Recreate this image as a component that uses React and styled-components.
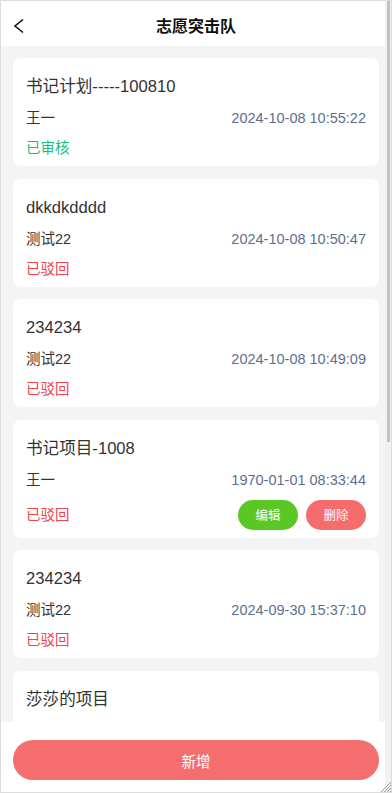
import styled, { createGlobalStyle } from "styled-components";

const GlobalStyle = createGlobalStyle`
  * { box-sizing: border-box; }
  body {
    margin: 0;
    font-family: "Liberation Sans", Arial, "Noto Sans CJK SC", sans-serif;
  }
`;

const records = [
  { title: "书记计划-----100810", name: "王一", time: "2024-10-08 10:55:22", status: "ok" },
  { title: "dkkdkdddd", name: "测试22", time: "2024-10-08 10:50:47", status: "back" },
  { title: "234234", name: "测试22", time: "2024-10-08 10:49:09", status: "back" },
  { title: "书记项目-1008", name: "王一", time: "1970-01-01 08:33:44", status: "back", editable: true },
  { title: "234234", name: "测试22", time: "2024-09-30 15:37:10", status: "back" },
  { title: "莎莎的项目", name: "测试22", time: "2024-09-30 15:20:11", status: "back" },
];

const App = () => {
  return (
    <>
      <GlobalStyle />
      <Frame>
        <Header>
          <BackBtn aria-label="返回">
            <svg width="12" height="16" viewBox="0 0 12 16">
              <path d="M10 1.5 L2 8 L10 14.5" fill="none" stroke="#111" strokeWidth="1.6" />
            </svg>
          </BackBtn>
          <Title>志愿突击队</Title>
        </Header>

        <List>
          {records.map((r, i) => (
            <Card key={i}>
              <CardTitle>{r.title}</CardTitle>
              <Row>
                <Name>{r.name}</Name>
                <Time>{r.time}</Time>
              </Row>
              <StatusRow $tall={r.editable}>
                <Status $ok={r.status === "ok"}>{r.status === "ok" ? "已审核" : "已驳回"}</Status>
                {r.editable && (
                  <Actions>
                    <SmallBtn $color="#5ac725">编辑</SmallBtn>
                    <SmallBtn $color="#f56c6c">删除</SmallBtn>
                  </Actions>
                )}
              </StatusRow>
            </Card>
          ))}
        </List>

        <Footer>
          <AddBtn>新增</AddBtn>
        </Footer>

        <ScrollTrack>
          <ScrollThumb />
        </ScrollTrack>
        <Grip width="12" height="12" viewBox="0 0 12 12">
          <path d="M12 2 L2 12 M12 5 L5 12 M12 8 L8 12 M12 11 L11 12" stroke="#9a9a9a" strokeWidth="1" />
        </Grip>
      </Frame>
    </>
  );
};

const Frame = styled.div`
  position: relative;
  width: 392px;
  height: 793px;
  border: 1px solid #dcdcdc;
  background: #f4f4f4;
  display: flex;
  flex-direction: column;
  overflow: hidden;
`;

const Header = styled.div`
  height: 45px;
  flex-shrink: 0;
  background: #fff;
  display: flex;
  align-items: center;
  justify-content: center;
  position: relative;
`;

const BackBtn = styled.button`
  position: absolute;
  left: 12px;
  top: 17px;
  padding: 0;
  border: none;
  background: none;
  display: flex;
`;

const Title = styled.h1`
  margin: 0;
  margin-top: 3px;
  font-size: 16px;
  font-weight: bold;
  color: #111;
  font-family: "Noto Sans CJK SC", sans-serif;
`;

const List = styled.div`
  flex: 1;
  min-height: 0;
  overflow: hidden;
  padding: 12px;
  display: flex;
  flex-direction: column;
  gap: 12.5px;
`;

const Card = styled.div`
  flex-shrink: 0;
  background: #fff;
  border-radius: 8px;
  padding: 16px 13px 8px;
`;

const CardTitle = styled.div`
  font-size: 16.6px;
  line-height: 26px;
  color: #333;
`;

const Row = styled.div`
  margin-top: 8px;
  display: flex;
  justify-content: space-between;
  align-items: center;
  line-height: 20px;
  font-size: 14.5px;
`;

const Name = styled.span`
  color: #333;
`;

const Time = styled.span`
  color: #606f8f;
`;

const StatusRow = styled.div`
  margin-top: 10px;
  height: ${(p) => (p.$tall ? "30px" : "20px")};
  display: flex;
  justify-content: space-between;
  align-items: center;
`;

const Status = styled.span`
  font-size: 14.5px;
  line-height: 20px;
  color: ${(p) => (p.$ok ? "#19be7f" : "#f0434d")};
`;

const Actions = styled.div`
  display: flex;
  gap: 8px;
`;

const SmallBtn = styled.button`
  width: 60px;
  height: 30px;
  border: none;
  border-radius: 15px;
  background: ${(p) => p.$color};
  color: #fff;
  font-size: 12.5px;
  font-family: "Noto Sans CJK SC", sans-serif;
  padding: 0;
`;

const Footer = styled.div`
  position: absolute;
  left: 0;
  right: 0;
  bottom: 0;
  height: 70px;
  background: #fff;
  padding: 18px 12px 0;
`;

const AddBtn = styled.button`
  width: 100%;
  height: 40px;
  border: none;
  border-radius: 20px;
  background: #f56e6e;
  color: #fff;
  font-size: 14.5px;
  font-family: "Noto Sans CJK SC", sans-serif;
`;

const ScrollTrack = styled.div`
  position: absolute;
  top: 0;
  right: 0;
  bottom: 0;
  width: 6px;
  background: #f1f1f1;
  padding: 0 1px 0 2px;
`;

const ScrollThumb = styled.div`
  height: 441px;
  background: #c1c1c1;
`;

const Grip = styled.svg`
  position: absolute;
  right: 0;
  bottom: 0;
`;

export default App;
